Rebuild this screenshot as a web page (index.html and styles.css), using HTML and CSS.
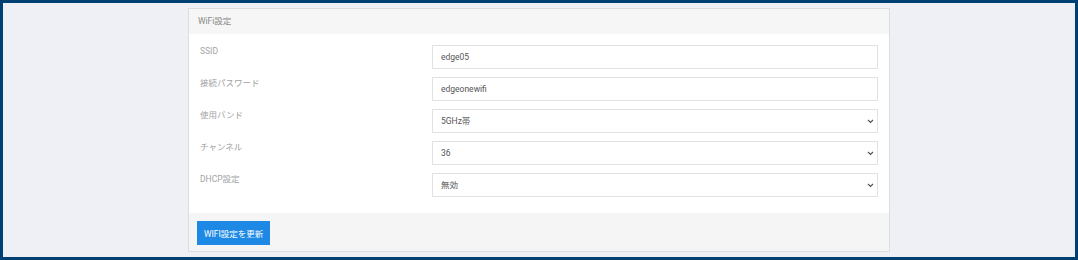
FILE: index.html
```html
<!DOCTYPE html>
<html lang="ja">
<head>
    <meta charset="UTF-8">
    <meta name="viewport" content="width=device-width, initial-scale=1.0">
    <title>WiFi設定</title>
    <link rel="stylesheet" href="styles.css">
</head>
<body>
    <div class="frame">
        <div class="card">
            <div class="card-header">WiFi設定</div>
            <div class="card-body">
                <div class="form-row">
                    <label class="form-label">SSID</label>
                    <input class="form-control" type="text" value="edge05">
                </div>
                <div class="form-row">
                    <label class="form-label">接続パスワード</label>
                    <input class="form-control" type="text" value="edgeonewifi">
                </div>
                <div class="form-row">
                    <label class="form-label">使用バンド</label>
                    <div class="select-wrap">
                        <select class="form-control">
                            <option>5GHz帯</option>
                            <option>2.4GHz帯</option>
                        </select>
                        <svg class="chevron" width="7" height="5" viewBox="0 0 7 5"><path d="M1 1 L3.5 3.5 L6 1" fill="none" stroke="#555" stroke-width="1.2"/></svg>
                    </div>
                </div>
                <div class="form-row">
                    <label class="form-label">チャンネル</label>
                    <div class="select-wrap">
                        <select class="form-control">
                            <option>36</option>
                            <option>40</option>
                            <option>44</option>
                            <option>48</option>
                        </select>
                        <svg class="chevron" width="7" height="5" viewBox="0 0 7 5"><path d="M1 1 L3.5 3.5 L6 1" fill="none" stroke="#555" stroke-width="1.2"/></svg>
                    </div>
                </div>
                <div class="form-row">
                    <label class="form-label">DHCP設定</label>
                    <div class="select-wrap">
                        <select class="form-control">
                            <option>無効</option>
                            <option>有効</option>
                        </select>
                        <svg class="chevron" width="7" height="5" viewBox="0 0 7 5"><path d="M1 1 L3.5 3.5 L6 1" fill="none" stroke="#555" stroke-width="1.2"/></svg>
                    </div>
                </div>
            </div>
            <div class="card-footer">
                <button class="btn-primary">WIFI設定を更新</button>
            </div>
        </div>
    </div>
</body>
</html>
```

FILE: styles.css
```css
html, body {
    margin: 0;
    padding: 0;
}
body {
    font-family: Roboto, "Noto Sans CJK JP", sans-serif;
    font-size: 8.5px;
    color: #555;
}
.frame {
    box-sizing: border-box;
    height: 260px;
    border: 3px solid #003f72;
    background: #eff0f5;
    padding: 5px 0 0 185px;
}
.card {
    width: 700px;
    border: 1px solid #dcdde0;
    background: #fff;
}
.card-header {
    height: 25px;
    line-height: 25px;
    padding: 0 9px;
    background: #f6f6f6;
    color: #888;
}
.card-body {
    padding: 11px 11px 16px 11px;
}
.form-row {
    display: grid;
    grid-template-columns: 232px 1fr;
    margin-bottom: 8px;
}
.form-row:last-child {
    margin-bottom: 0;
}
.form-label {
    line-height: 12px;
    color: #a3a3a3;
}
.form-control {
    box-sizing: border-box;
    width: 100%;
    height: 24px;
    margin: 0;
    padding: 0 8px;
    border: 1px solid #e2e2e2;
    border-radius: 0;
    background: #fff;
    font-family: inherit;
    font-size: 8.5px;
    color: #555;
    outline: none;
}
select.form-control {
    appearance: none;
    -webkit-appearance: none;
}
.select-wrap {
    position: relative;
}
.chevron {
    position: absolute;
    right: 4px;
    top: 10px;
    pointer-events: none;
}
.card-footer {
    height: 38px;
    box-sizing: border-box;
    padding: 8px 8px 0 8px;
    background: #f5f5f5;
}
.btn-primary {
    height: 24px;
    padding: 0 7px;
    border: none;
    background: #1e88e5;
    color: #fff;
    font-family: inherit;
    font-size: 8.5px;
    cursor: pointer;
}
```
